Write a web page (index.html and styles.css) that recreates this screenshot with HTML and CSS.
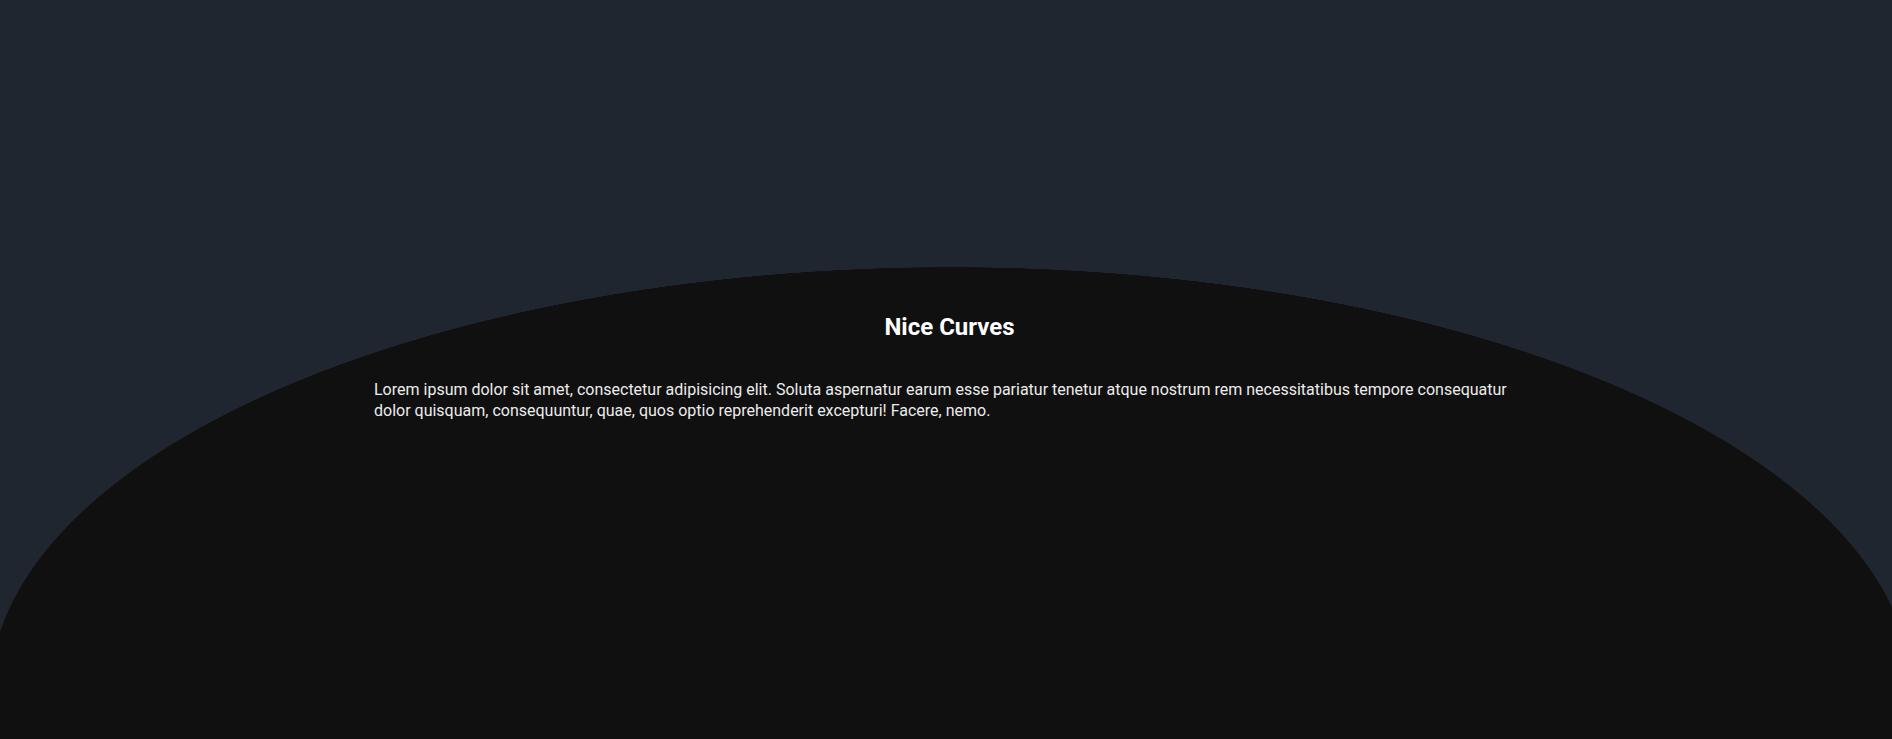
FILE: index.html
```html
<!DOCTYPE html>
<html lang="en">
<head>
<meta charset="utf-8">
<title>Nice Curves</title>
<link rel="stylesheet" href="styles.css">
</head>
<body>
  <section class="bubble">
    <h2 class="bubble-title">Nice Curves</h2>
    <p class="bubble-text">Lorem ipsum dolor sit amet, consectetur adipisicing elit. Soluta aspernatur earum esse pariatur tenetur atque nostrum rem necessitatibus tempore consequatur dolor quisquam, consequuntur, quae, quos optio reprehenderit excepturi! Facere, nemo.</p>
  </section>
</body>
</html>
```

FILE: styles.css
```css
html, body {
  margin: 0;
  padding: 0;
}

body {
  background: #20262f;
  font-family: Roboto, "Liberation Sans", sans-serif;
  color: #ececec;
  overflow: hidden;
}

.bubble {
  box-sizing: border-box;
  height: 100vh;
  padding: 313px 367px 0 374px;
  background: radial-gradient(962px 428px at 951px 695px, #101010 99.9%, #20262f 100%);
}

.bubble-title {
  margin: 0 0 38px;
  font-size: 24px;
  font-weight: 700;
  line-height: 28px;
  text-align: center;
  color: #ffffff;
}

.bubble-text {
  margin: 0;
  font-size: 16px;
  line-height: 21px;
}
```
